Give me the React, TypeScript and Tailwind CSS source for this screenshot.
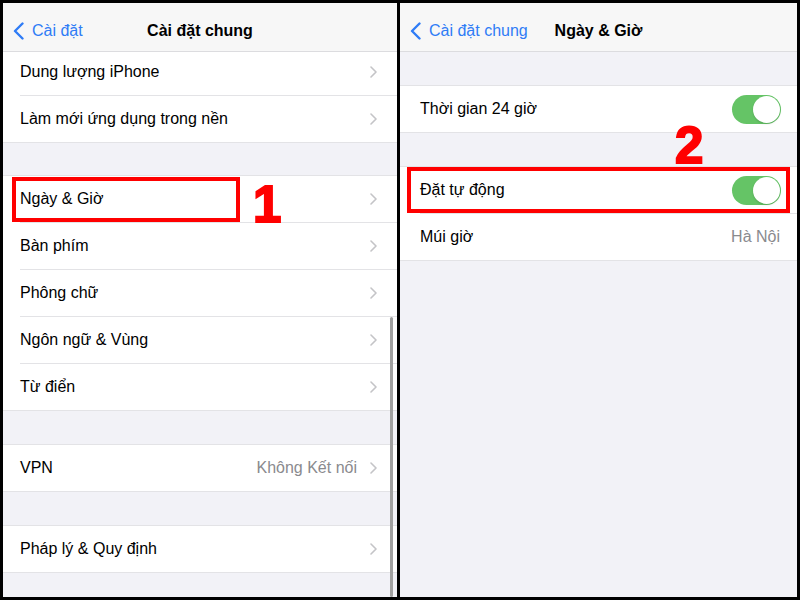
import React from 'react';

const font = { fontFamily: '"Liberation Sans", Arial, sans-serif' };

function Chevron() {
  return (
    <svg width="7" height="12" viewBox="0 0 7 12" fill="none" className="shrink-0">
      <path d="M1 1l5 5-5 5" stroke="#c4c4c7" strokeWidth="1.6" strokeLinecap="round" strokeLinejoin="round" />
    </svg>
  );
}

function BackChevron() {
  return (
    <svg width="11" height="18" viewBox="0 0 11 18" fill="none" className="shrink-0">
      <path d="M9.5 1.5L2 9l7.5 7.5" stroke="#2f7cf6" strokeWidth="2.4" strokeLinecap="round" strokeLinejoin="round" />
    </svg>
  );
}

function NavBar({ back, title }: { back: string; title: string }) {
  return (
    <div className="h-[49px] shrink-0 pt-[7px] bg-[#f7f7f7] border-b border-[#dcdcdf] grid grid-cols-[1fr_auto_1fr] items-center">
      <div className="flex items-center gap-[8px] pl-[10px] text-[#2f7cf6] text-[16px]">
        <BackChevron />
        <span>{back}</span>
      </div>
      <div className="text-[16px] font-bold text-black">{title}</div>
      <div />
    </div>
  );
}

function Row({
  label,
  value,
  chevron = true,
  last = false,
  children,
}: {
  label: string;
  value?: string;
  chevron?: boolean;
  last?: boolean;
  children?: React.ReactNode;
}) {
  return (
    <div className="relative bg-white pl-[17px]">
      <div className={`flex items-center pr-[20px] ${last ? 'h-[46px]' : 'h-[47px] border-b border-[#e3e3e6]'}`}>
        <span className="flex-1 text-[16px] text-black">{label}</span>
        {value && <span className="text-[16px] text-[#8a8a8e] mr-[13px]">{value}</span>}
        {chevron && <Chevron />}
      </div>
      {children}
    </div>
  );
}

function Toggle() {
  return (
    <div className="w-[49px] h-[29px] rounded-full bg-[#65c466] p-[1px] flex justify-end">
      <div className="w-[27px] h-[27px] rounded-full bg-white shadow-[0_1px_2px_rgba(0,0,0,0.15)]" />
    </div>
  );
}

function Group({ children }: { children: React.ReactNode }) {
  return <div className="border-y border-[#e3e3e6]">{children}</div>;
}

export default function App() {
  return (
    <div className="w-[800px] h-[600px] bg-black p-[3px] flex gap-[3px]" style={font}>
      {/* Left panel */}
      <div className="relative w-[394px] h-full bg-[#f2f2f7] flex flex-col overflow-hidden">
        <NavBar back="Cài đặt" title="Cài đặt chung" />
        <div className="bg-white pl-[17px]">
          <div className="h-[44px] pb-[3px] flex items-center pr-[20px] border-b border-[#e3e3e6]">
            <span className="flex-1 text-[16px] text-black">Dung lượng iPhone</span>
            <Chevron />
          </div>
        </div>
        <div className="border-b border-[#e3e3e6]">
          <Row label="Làm mới ứng dụng trong nền" last />
        </div>
        <div className="h-[32px]" />
        <Group>
          <Row label="Ngày & Giờ">
            <div className="absolute left-[9px] top-[1px] w-[228px] h-[45px] border-4 border-[#ff0000]" />
            <span className="absolute left-[250px] top-[3px] text-[51px] leading-none font-bold text-[#ff0000] [-webkit-text-stroke:2px_#ff0000]">
              1
            </span>
          </Row>
          <Row label="Bàn phím" />
          <Row label="Phông chữ" />
          <Row label="Ngôn ngữ & Vùng" />
          <Row label="Từ điển" last />
        </Group>
        <div className="h-[33px]" />
        <Group>
          <Row label="VPN" value="Không Kết nối" last />
        </Group>
        <div className="h-[33px]" />
        <Group>
          <Row label="Pháp lý & Quy định" last />
        </Group>
        {/* scroll indicator */}
        <div className="absolute right-[4px] top-[314px] bottom-0 w-[3px] rounded-full bg-[#a0a0a0]" />
      </div>

      {/* Right panel */}
      <div className="relative flex-1 h-full bg-[#f2f2f7] flex flex-col overflow-hidden">
        <NavBar back="Cài đặt chung" title="Ngày & Giờ" />
        <div className="h-[33px]" />
        <Group>
          <div className="bg-white pl-[20px] pr-[16px] h-[46px] flex items-center">
            <span className="flex-1 text-[16px] text-black">Thời gian 24 giờ</span>
            <Toggle />
          </div>
        </Group>
        <div className="relative h-[33px]">
          <span className="absolute left-[275px] top-[-13px] text-[51px] leading-none font-bold text-[#ff0000] [-webkit-text-stroke:2px_#ff0000]">
            2
          </span>
        </div>
        <Group>
          <div className="relative bg-white pl-[20px]">
            <div className="h-[47px] flex items-center pr-[16px] border-b border-[#e3e3e6]">
              <span className="flex-1 text-[16px] text-black">Đặt tự động</span>
              <Toggle />
            </div>
            <div className="absolute left-[7px] right-[7px] top-0 h-[46px] border-4 border-[#ff0000]" />
          </div>
          <div className="bg-white pl-[20px] pr-[17px] h-[46px] flex items-center">
            <span className="flex-1 text-[16px] text-black">Múi giờ</span>
            <span className="text-[16px] text-[#8a8a8e]">Hà Nội</span>
          </div>
        </Group>
      </div>
    </div>
  );
}
